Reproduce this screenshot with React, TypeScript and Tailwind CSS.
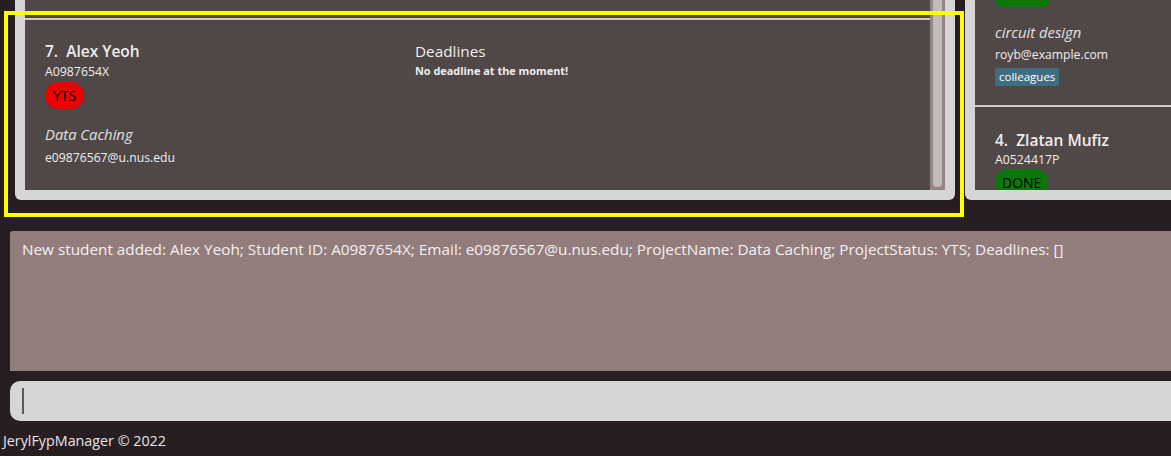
import React from 'react';

const FONT = { fontFamily: '"Open Sans", "Noto Sans", sans-serif' };

function StudentCard() {
  return (
    <div className="flex h-[170px] shrink-0 bg-[#504847] pl-5 pt-[21px]">
      {/* Student details */}
      <div className="flex w-[370px] flex-col">
        <div className="text-[15.5px] font-semibold leading-[21px] text-[#eeeeee]">7.&nbsp;&nbsp;Alex Yeoh</div>
        <div className="mt-[2px] text-[12.3px] leading-[16px] text-[#eeeeee]">A0987654X</div>
        <span className="mt-[2px] w-fit rounded-full bg-[#ee0000] px-[8px] text-[14px] leading-[27px] text-black">YTS</span>
        <div className="mt-[15px] text-[14.8px] italic leading-[20px] text-[#e4e0e0]">Data Caching</div>
        <div className="mt-[6px] text-[12.2px] leading-[16px] text-[#eeeeee]">e09876567@u.nus.edu</div>
      </div>

      {/* Deadlines */}
      <div className="flex flex-col">
        <div className="text-[15.3px] leading-[21px] text-[#eeeeee]">Deadlines</div>
        <div className="mt-[1px] text-[10.9px] font-bold leading-[15px] text-[#eeeeee]">No deadline at the moment!</div>
      </div>
    </div>
  );
}

export default function App() {
  return (
    <div className="relative flex h-[456px] w-[1171px] flex-col overflow-hidden bg-[#261e20]" style={FONT}>
      {/* Top row: student list + side list */}
      <div className="flex h-[200px] shrink-0 gap-[10px] pl-[15px]">
        <div className="flex w-[940px] rounded-b-[6px] bg-[#d6d6d6] px-[10px] pb-[10px]">
          <div className="flex flex-1 flex-col overflow-hidden">
            <div className="h-[18px] shrink-0 bg-[#504847]" />
            <div className="h-[2px] shrink-0 bg-[#d0cccc]" />
            <StudentCard />
          </div>
          {/* Scrollbar */}
          <div className="flex w-[15px] justify-center bg-[#938685] px-[3px]">
            <div className="h-[187px] w-full rounded-b-[4px] bg-[#c2bbba]" />
          </div>
        </div>

        <div className="flex flex-1 rounded-bl-[6px] bg-[#d6d6d6] pb-[10px] pl-[10px]">
          <div className="flex flex-1 flex-col overflow-hidden bg-[#504847]">
            <div className="flex h-[105px] shrink-0 flex-col pl-5">
              <span className="h-[7px] w-[55px] rounded-b-full bg-[#0a770a]" />
              <div className="mt-[15px] text-[14.8px] italic leading-[20px] text-[#e4e0e0]">circuit design</div>
              <div className="mt-[5px] text-[12.2px] leading-[16px] text-[#eeeeee]">royb@example.com</div>
              <span className="mt-[5px] w-fit rounded-[2px] bg-[#3e6e80] px-[4px] text-[11.5px] leading-[18px] text-white">colleagues</span>
            </div>
            <div className="h-[2px] shrink-0 bg-[#d0cccc]" />
            <div className="flex flex-col pl-5 pt-[23px]">
              <div className="text-[15.5px] font-semibold leading-[21px] text-[#eeeeee]">4.&nbsp;&nbsp;Zlatan Mufiz</div>
              <div className="mt-[1px] text-[12.3px] leading-[16px] text-[#eeeeee]">A0524417P</div>
              <span className="mt-[1px] w-fit rounded-full bg-[#0a770a] px-[7px] text-[14px] leading-[27px] text-black">DONE</span>
            </div>
          </div>
        </div>
      </div>

      {/* Result display */}
      <div className="ml-[10px] mt-[31px] h-[140px] shrink-0 rounded-tl-[3px] bg-[#937d7c] px-3 pt-[7px] text-[15.3px] leading-[22px] text-[#f4f0f0]">
        New student added: Alex Yeoh; Student ID: A0987654X; Email: e09876567@u.nus.edu; ProjectName: Data Caching; ProjectStatus: YTS; Deadlines: []
      </div>

      {/* Command box */}
      <div className="ml-[10px] mt-[10px] flex h-[40px] shrink-0 items-center rounded-l-[10px] bg-[#d6d6d6] pl-3">
        <span className="h-[26px] w-[2px] bg-[#5a5a5a]" />
      </div>

      {/* Status bar */}
      <div className="mt-[10px] pl-[3px] text-[14.3px] leading-[20px] text-[#e8e4e4]">JerylFypManager © 2022</div>

      {/* Selection highlight */}
      <div className="pointer-events-none absolute left-[4px] top-[11px] h-[206px] w-[960px] border-4 border-[#ffff00]" />
    </div>
  );
}
